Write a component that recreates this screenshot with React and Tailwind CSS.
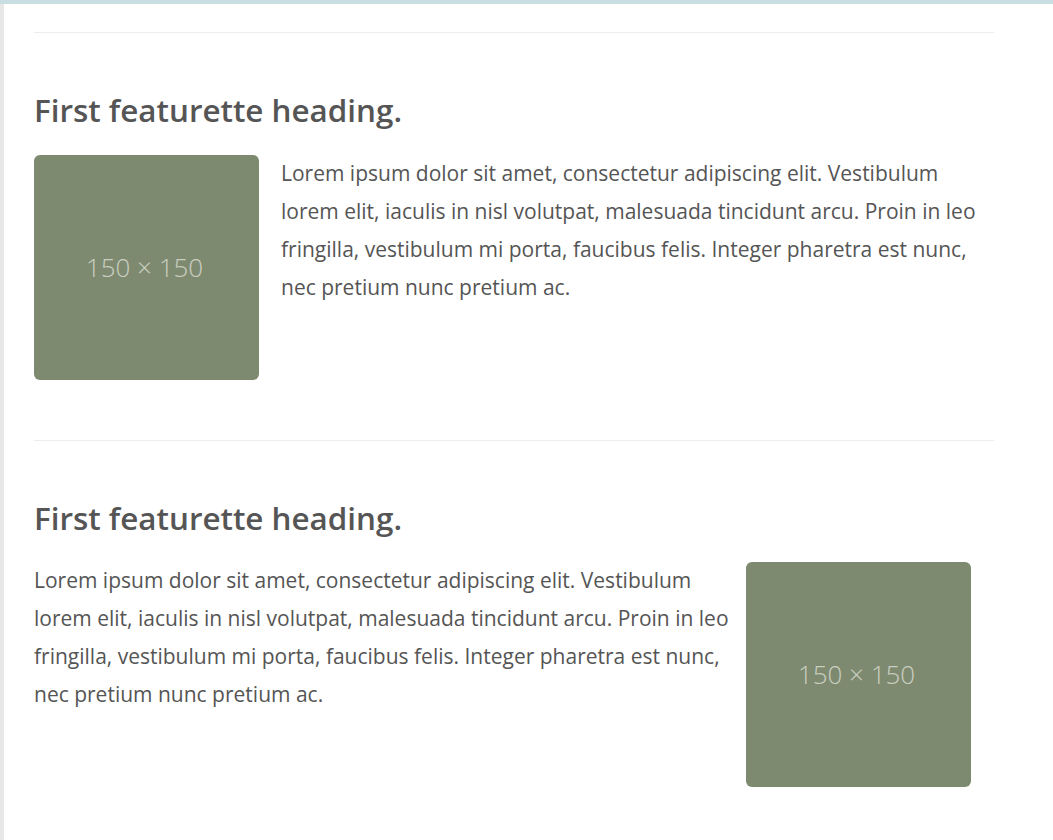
import React from "react";

const text =
  "Lorem ipsum dolor sit amet, consectetur adipiscing elit. Vestibulum lorem elit, iaculis in nisl volutpat, malesuada tincidunt arcu. Proin in leo fringilla, vestibulum mi porta, faucibus felis. Integer pharetra est nunc, nec pretium nunc pretium ac.";

function Placeholder() {
  return (
    <div className="w-[225px] h-[225px] shrink-0 rounded-[6px] bg-[#7e8a70] flex items-center justify-center">
      <span className="text-[26px] leading-none text-[#c9cec0] font-light -mt-[2px] -ml-[4px]" style={{ fontFamily: '"Open Sans", sans-serif' }}>
        150 × 150
      </span>
    </div>
  );
}

export default function App() {
  return (
    <div
      className="w-[1053px] h-[840px] bg-white border-t-4 border-[#c8dee2] flex overflow-hidden"
      style={{ fontFamily: '"Open Sans", "Noto Sans", sans-serif' }}
    >
      <div className="w-1 bg-[#e7e7e7] shrink-0" />
      <div className="pl-[30px] pt-[28px]">
        <div className="w-[960px]">
          <div className="h-px bg-[#eeeeee]" />
          <h2 className="mt-[60px] text-[31.4px] leading-[33px] font-semibold text-[#555555]">
            First featurette heading.
          </h2>
          <div className="mt-[29px] flex items-start">
            <Placeholder />
            <p className="ml-[22px] text-[21px] leading-[38px] text-[#555555] -mt-[1px]">{text}</p>
          </div>
          <div className="mt-[60px] h-px bg-[#eeeeee]" />
          <h2 className="mt-[60px] text-[31.4px] leading-[33px] font-semibold text-[#555555]">
            First featurette heading.
          </h2>
          <div className="mt-[28px] flex items-start">
            <p className="w-[700px] text-[21px] leading-[38px] text-[#555555] -mt-[1px]">{text}</p>
            <div className="ml-[12px]">
              <Placeholder />
            </div>
          </div>
        </div>
      </div>
    </div>
  );
}
